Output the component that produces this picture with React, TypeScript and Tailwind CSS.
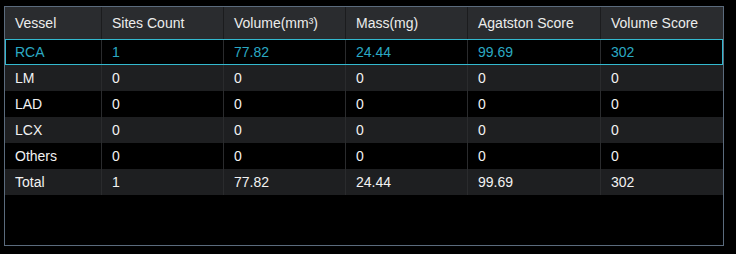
import React from "react";

// Calcium score table per vessel
const COLUMNS = [
  "Vessel",
  "Sites Count",
  "Volume(mm³)",
  "Mass(mg)",
  "Agatston Score",
  "Volume Score",
];

const ROWS = [
  ["RCA", "1", "77.82", "24.44", "99.69", "302"],
  ["LM", "0", "0", "0", "0", "0"],
  ["LAD", "0", "0", "0", "0", "0"],
  ["LCX", "0", "0", "0", "0", "0"],
  ["Others", "0", "0", "0", "0", "0"],
  ["Total", "1", "77.82", "24.44", "99.69", "302"],
];

const GRID = "grid grid-cols-[97px_122px_122px_122px_133px_122px]";

export default function App() {
  return (
    <div
      className="h-[254px] w-[736px] bg-black pt-[6px] pl-[4px]"
      style={{ fontFamily: '"Liberation Sans", Arial, sans-serif' }}
    >
      <div className="flex h-[240px] w-[720px] flex-col border border-[#5b6b7d] bg-black">
        {/* Header */}
        <div className={`${GRID} h-[32px] bg-[#2a2c2f]`}>
          {COLUMNS.map((col, i) => (
            <div
              key={col}
              className={`flex items-center pl-[10px] text-[14px] text-[#ececec] ${
                i < COLUMNS.length - 1 ? "border-r border-[#1b1c1e]" : ""
              }`}
            >
              {col}
            </div>
          ))}
        </div>

        {/* Body rows */}
        {ROWS.map((row, r) => {
          const selected = r === 0;
          const striped = r % 2 === 1;
          return (
            <div
              key={row[0]}
              className={`${GRID} relative h-[26px] ${
                striped ? "bg-[#1e1f21]" : "bg-black"
              } ${
                selected
                  ? "outline outline-1 -outline-offset-1 outline-[#33b9cf]"
                  : ""
              }`}
            >
              {row.map((cell, i) => (
                <div
                  key={i}
                  className={`flex items-center pl-[10px] text-[14px] ${
                    selected ? "text-[#2ba9c3]" : "text-[#f2f2f2]"
                  } ${i < row.length - 1 ? "border-r border-[#2a2b2d]" : ""}`}
                >
                  {cell}
                </div>
              ))}
            </div>
          );
        })}
      </div>
    </div>
  );
}
